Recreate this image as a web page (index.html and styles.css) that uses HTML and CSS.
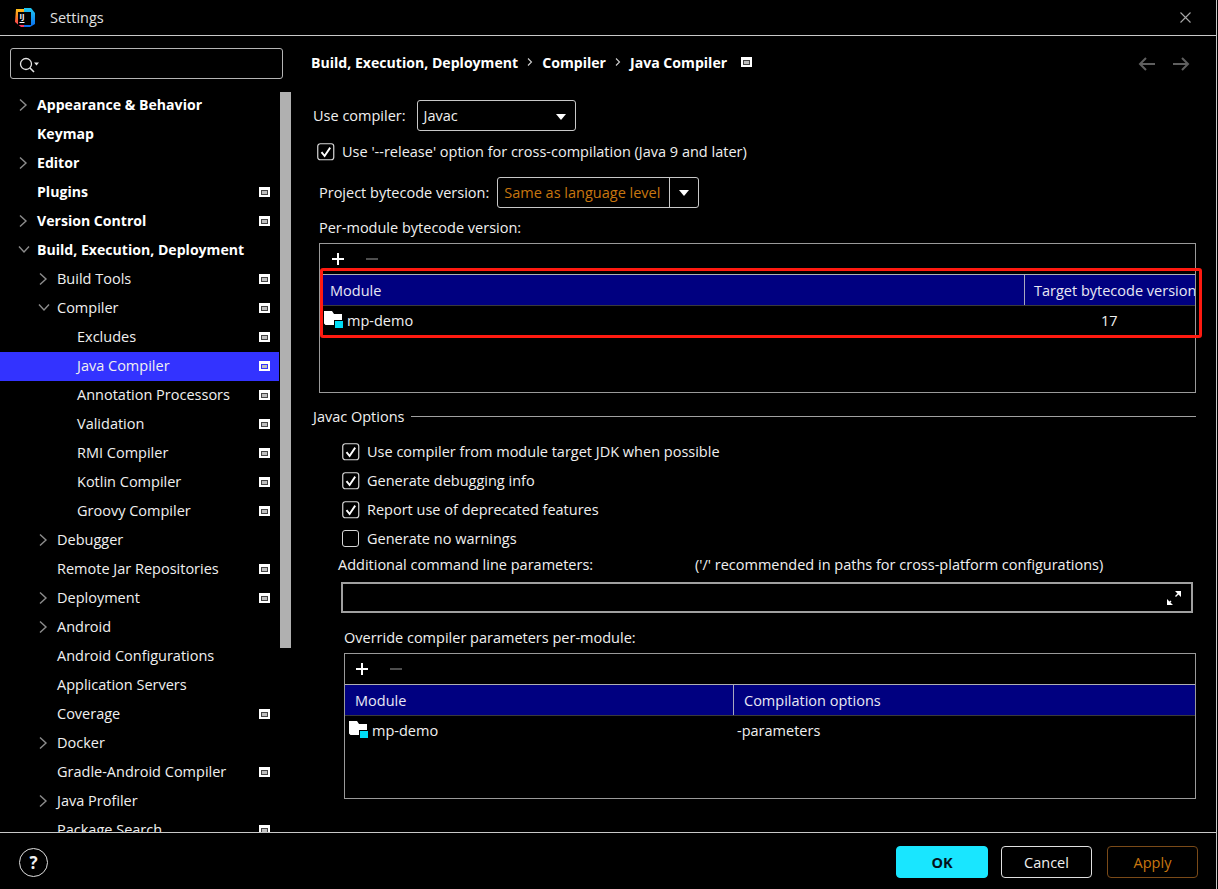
FILE: index.html
```html
<!DOCTYPE html>
<html lang="en">
<head>
    <meta charset="UTF-8">
    <meta name="viewport" content="width=device-width, initial-scale=1.0">
    <title>Settings</title>
    <link rel="stylesheet" href="styles.css">
</head>
<body>
    <svg class="defs" width="0" height="0">
        <symbol id="chev-right" viewBox="0 0 10 14"><path d="M2 1.5 8 7 2 12.5" fill="none" stroke="#8c8c8c" stroke-width="1.4"/></symbol>
        <symbol id="chev-down" viewBox="0 0 12 9"><path d="M1 1.500 6 7 11 1.500" fill="none" stroke="#8c8c8c" stroke-width="1.4"/></symbol>
        <symbol id="check" viewBox="0 0 18 18"><rect x=".75" y=".75" width="16" height="16" rx="2.5" fill="#000" stroke="#d8d8d8" stroke-width="1.2"/><path d="M4.5 9.2 7.6 13 13.2 4.6" fill="none" stroke="#fff" stroke-width="1.9"/></symbol>
        <symbol id="folder" viewBox="0 0 20 18"><path d="M0 0h8l2 3h8v11H1.500L0 12.500Z" fill="#fff"/><rect x="10" y="9" width="10" height="9" fill="#000"/><rect x="11" y="10" width="8" height="7" fill="#00dcf5"/></symbol>
        <linearGradient id="logo-warm" x1="0" y1="0" x2="0" y2="1"><stop offset="0" stop-color="#ffc21a"/><stop offset=".45" stop-color="#fb7a24"/><stop offset="1" stop-color="#fe2c6a"/></linearGradient>
        <linearGradient id="logo-cool" x1="0" y1="0" x2="0" y2="1"><stop offset="0" stop-color="#20c8f0"/><stop offset="1" stop-color="#0a6cf0"/></linearGradient>
    </svg>

    <div class="window">
        <header class="titlebar">
            <svg class="logo" width="20" height="20" viewBox="0 0 20 20">
                <path d="M1 1h9v18H6L0 14Z" fill="url(#logo-warm)"/>
                <path d="M9 0h7l4 5v11l-5 3H9Z" fill="url(#logo-cool)"/>
                <rect x="3" y="4" width="13" height="13" fill="#000"/>
                <text x="4.500" y="11" class="logo-text">IJ</text>
                <rect x="4.500" y="14" width="5" height="1" fill="#fff"/>
            </svg>
            <span class="title">Settings</span>
            <svg class="close" width="11" height="11" viewBox="0 0 11 11"><path d="M.5.5 10.500 10.500M10.500.5 .5 10.500" stroke="#a8a8a8" stroke-width="1.1"/></svg>
        </header>

        <div class="content">
            <aside class="sidebar">
                <div class="search">
                    <svg width="24" height="18" viewBox="0 0 24 18"><circle cx="8" cy="8" r="5.5" fill="none" stroke="#e4e4e4" stroke-width="1.3"/><path d="M12 12 16 16" stroke="#e4e4e4" stroke-width="1.6"/><path d="M16 6.5h5L18.500 9.500Z" fill="#e4e4e4"/></svg>
                </div>
                <div class="tree-wrap">
                    <nav class="tree">
                        <div class="row l0 strong"><svg class="chev"><use href="#chev-right"/></svg><span>Appearance &amp; Behavior</span></div>
                        <div class="row l0 strong"><span>Keymap</span></div>
                        <div class="row l0 strong"><svg class="chev"><use href="#chev-right"/></svg><span>Editor</span></div>
                        <div class="row l0 strong"><span>Plugins</span><i class="badge"></i></div>
                        <div class="row l0 strong"><svg class="chev"><use href="#chev-right"/></svg><span>Version Control</span><i class="badge"></i></div>
                        <div class="row l0 strong"><svg class="chev open"><use href="#chev-down"/></svg><span>Build, Execution, Deployment</span></div>
                        <div class="row l1"><svg class="chev"><use href="#chev-right"/></svg><span>Build Tools</span><i class="badge"></i></div>
                        <div class="row l1"><svg class="chev open"><use href="#chev-down"/></svg><span>Compiler</span><i class="badge"></i></div>
                        <div class="row l2"><span>Excludes</span><i class="badge"></i></div>
                        <div class="row l2 selected"><span>Java Compiler</span><i class="badge"></i></div>
                        <div class="row l2"><span>Annotation Processors</span><i class="badge"></i></div>
                        <div class="row l2"><span>Validation</span><i class="badge"></i></div>
                        <div class="row l2"><span>RMI Compiler</span><i class="badge"></i></div>
                        <div class="row l2"><span>Kotlin Compiler</span><i class="badge"></i></div>
                        <div class="row l2"><span>Groovy Compiler</span><i class="badge"></i></div>
                        <div class="row l1"><svg class="chev"><use href="#chev-right"/></svg><span>Debugger</span></div>
                        <div class="row l1"><span>Remote Jar Repositories</span><i class="badge"></i></div>
                        <div class="row l1"><svg class="chev"><use href="#chev-right"/></svg><span>Deployment</span><i class="badge"></i></div>
                        <div class="row l1"><svg class="chev"><use href="#chev-right"/></svg><span>Android</span></div>
                        <div class="row l1"><span>Android Configurations</span></div>
                        <div class="row l1"><span>Application Servers</span></div>
                        <div class="row l1"><span>Coverage</span><i class="badge"></i></div>
                        <div class="row l1"><svg class="chev"><use href="#chev-right"/></svg><span>Docker</span></div>
                        <div class="row l1"><span>Gradle-Android Compiler</span><i class="badge"></i></div>
                        <div class="row l1"><svg class="chev"><use href="#chev-right"/></svg><span>Java Profiler</span></div>
                        <div class="row l1"><span>Package Search</span><i class="badge"></i></div>
                    </nav>
                    <div class="scrollbar"></div>
                </div>
            </aside>

            <main class="panel">
                <div class="crumbs">
                    <span>Build, Execution, Deployment</span>
                    <svg class="sep" width="6" height="10" viewBox="0 0 6 10"><path d="M1 1.500 4.500 5 1 8.500" fill="none" stroke="#cfcfcf" stroke-width="1.100"/></svg>
                    <span>Compiler</span>
                    <svg class="sep" width="6" height="10" viewBox="0 0 6 10"><path d="M1 1.500 4.500 5 1 8.500" fill="none" stroke="#cfcfcf" stroke-width="1.100"/></svg>
                    <span>Java Compiler</span>
                    <i class="badge crumb-badge"></i>
                    <div class="nav-arrows">
                        <svg width="18" height="14" viewBox="0 0 18 14"><path d="M17 7H2M8 1 2 7l6 6" fill="none" stroke="#5f5f5f" stroke-width="2"/></svg>
                        <svg width="18" height="14" viewBox="0 0 18 14"><path d="M1 7h15M10 1l6 6-6 6" fill="none" stroke="#5f5f5f" stroke-width="2"/></svg>
                    </div>
                </div>

                <div class="compiler-row">
                    <label>Use compiler:</label>
                    <div class="combo compiler-combo"><span>Javac</span><b class="caret"></b></div>
                </div>

                <div class="check release"><svg class="box"><use href="#check"/></svg><span>Use '--release' option for cross-compilation (Java 9 and later)</span></div>

                <div class="bytecode-row">
                    <label>Project bytecode version:</label>
                    <div class="combo bytecode-combo"><span class="orange">Same as language level</span><div class="combo-btn"><b class="caret"></b></div></div>
                </div>

                <div class="per-module">
                    <div class="section-label">Per-module bytecode version:</div>
                    <div class="table table-top">
                        <div class="tools"><span class="plus"></span><span class="minus"></span></div>
                        <div class="thead">
                            <div class="th th-module">Module</div>
                            <div class="th th-target">Target bytecode version</div>
                        </div>
                        <div class="tr">
                            <svg class="folder"><use href="#folder"/></svg><span>mp-demo</span>
                            <span class="version">17</span>
                        </div>
                    </div>
                    <div class="annotation"></div>
                </div>

                <div class="group-title"><span>Javac Options</span><i></i></div>

                <div class="options">
                    <div class="check"><svg class="box"><use href="#check"/></svg><span>Use compiler from module target JDK when possible</span></div>
                    <div class="check"><svg class="box"><use href="#check"/></svg><span>Generate debugging info</span></div>
                    <div class="check"><svg class="box"><use href="#check"/></svg><span>Report use of deprecated features</span></div>
                    <div class="check"><span class="empty-box"></span><span>Generate no warnings</span></div>
                </div>

                <div class="params-label"><span class="params-name">Additional command line parameters:</span><span>('/' recommended in paths for cross-platform configurations)</span></div>
                <div class="params-input">
                    <svg width="16" height="16" viewBox="0 0 16 16"><path d="M9.500 6.500 14.500 1.500M5 11 1.500 14.500" stroke="#fff" stroke-width="1.400"/><path d="M9 1h6v6ZM1 9v6h6Z" fill="#fff"/></svg>
                </div>

                <div class="override">
                    <div class="section-label">Override compiler parameters per-module:</div>
                    <div class="table table-bottom">
                        <div class="tools"><span class="plus"></span><span class="minus"></span></div>
                        <div class="thead">
                            <div class="th th-module2">Module</div>
                            <div class="th th-options">Compilation options</div>
                        </div>
                        <div class="tr">
                            <svg class="folder"><use href="#folder"/></svg><span class="module-name">mp-demo</span>
                            <span>-parameters</span>
                        </div>
                    </div>
                </div>
            </main>
        </div>

        <footer class="footer">
            <div class="help">?</div>
            <div class="buttons">
                <button class="btn btn-ok">OK</button>
                <button class="btn btn-cancel">Cancel</button>
                <button class="btn btn-apply">Apply</button>
            </div>
        </footer>
    </div>
</body>
</html>
```

FILE: styles.css
```css
* {
    margin: 0;
    padding: 0;
    box-sizing: border-box;
}

body {
    width: 1218px;
    height: 889px;
    background: #000;
    color: #f0f0f0;
    font-family: "Open Sans", "Noto Sans", sans-serif;
    font-size: 14.5px;
    overflow: hidden;
}

.defs {
    position: absolute;
}

.window {
    width: 1217px;
    height: 889px;
    border-right: 1px solid #c8c8c8;
    display: flex;
    flex-direction: column;
}

/* title bar */
.titlebar {
    height: 36px;
    flex: none;
    border-bottom: 1px solid #c8c8c8;
    display: flex;
    align-items: center;
    padding: 0 25px 0 15px;
}

.logo-text {
    font-size: 7.500px;
    font-weight: 700;
    fill: #fff;
}

.title {
    margin-left: 15px;
    flex: 1;
    color: #e0e0e0;
}

/* main split */
.content {
    flex: 1;
    display: flex;
    min-height: 0;
}

.sidebar {
    width: 298px;
    flex: none;
    display: flex;
    flex-direction: column;
}

.search {
    margin: 12px 0 0 10px;
    width: 273px;
    height: 31px;
    flex: none;
    border: 1px solid #b4b4b4;
    border-radius: 3px;
    display: flex;
    align-items: center;
    padding: 2px 0 0 7px;
}

.tree-wrap {
    flex: 1;
    display: flex;
    min-height: 0;
    overflow: hidden;
    padding-top: 12px;
}

.tree {
    width: 280px;
    flex: none;
    height: 800px;
}

.scrollbar {
    width: 11px;
    height: 556px;
    margin-top: 1px;
    background: #b0b0b0;
}

.row {
    height: 29px;
    padding-bottom: 2px;
    display: flex;
    align-items: center;
    position: relative;
    color: #f0f0f0;
    white-space: nowrap;
}

.row.strong {
    font-weight: 700;
    font-size: 14.1px;
    color: #fff;
}

.l0 { padding-left: 37px; }
.l1 { padding-left: 57px; }
.l2 { padding-left: 77px; }

.chev {
    position: absolute;
    top: 7px;
    width: 10px;
    height: 14px;
}

.chev.open {
    top: 9px;
    width: 12px;
    height: 9px;
}

.l0 .chev { left: 18px; }
.l1 .chev { left: 38px; }

.selected {
    background: #3333ff;
    margin-right: 1px;
}

.badge {
    display: block;
    width: 11px;
    height: 10px;
    background: #bdbdbd;
    border: 2px solid #fff;
    border-top-width: 3px;
    box-shadow: inset 0 0 0 1px #444;
}

.row .badge {
    position: absolute;
    left: 259px;
    top: 9px;
}

.selected .badge {
    box-shadow: inset 0 0 0 1px #3333ff;
}

/* right panel */
.panel {
    flex: 1;
    padding-left: 15px;
    padding-right: 20px;
    position: relative;
    min-width: 0;
}

.crumbs {
    height: 20px;
    margin-top: 16px;
    display: flex;
    align-items: center;
    gap: 9px;
    font-weight: 700;
    font-size: 14.1px;
    color: #fff;
    margin-left: -2px;
}

.crumb-badge {
    margin-left: 5px;
}

.nav-arrows {
    margin-left: auto;
    display: flex;
    gap: 16px;
    margin-top: 3px;
    margin-right: 6px;
}

.compiler-row {
    margin-top: 28px;
    display: flex;
    align-items: center;
    gap: 11px;
}

.combo {
    border: 1px solid #c8c8c8;
    border-radius: 3px;
    height: 31px;
    display: flex;
    align-items: center;
    position: relative;
}

.compiler-combo {
    width: 159px;
    padding-left: 6px;
}

.caret {
    width: 0;
    height: 0;
    border-left: 5.500px solid transparent;
    border-right: 5.500px solid transparent;
    border-top: 6px solid #fff;
}

.compiler-combo .caret {
    position: absolute;
    right: 9px;
    top: 13px;
}

.check {
    display: flex;
    align-items: center;
    height: 29px;
    gap: 7px;
}

.box {
    width: 18px;
    height: 18px;
    flex: none;
}

.empty-box {
    width: 17px;
    height: 17px;
    flex: none;
    border: 1px solid #d8d8d8;
    border-radius: 3px;
    margin-right: 1px;
}

.release {
    margin: 6px 0 0 4px;
}

.bytecode-row {
    margin: 11px 0 0 6px;
    display: flex;
    align-items: center;
    gap: 8px;
}

.bytecode-combo {
    width: 202px;
    padding-left: 6px;
}

.orange {
    color: #c8760f;
}

.combo-btn {
    position: absolute;
    right: 0;
    top: 0;
    bottom: 0;
    width: 29px;
    border-left: 1px solid #c8c8c8;
    display: flex;
    align-items: center;
    justify-content: center;
}

.per-module {
    margin: 10px 0 0 6px;
    position: relative;
}

.section-label {
    height: 20px;
    line-height: 20px;
    white-space: nowrap;
}

.table {
    margin-top: 5px;
    border: 1px solid #9a9a9a;
}

.table-top {
    height: 150px;
    width: 877px;
}

.tools {
    height: 31px;
    display: flex;
    align-items: center;
    padding-left: 11px;
    gap: 20px;
    border-bottom: 1px solid #b0b0b0;
}

.plus,
.minus {
    width: 14px;
    height: 14px;
    display: block;
}

.plus {
    background:
        linear-gradient(#fff, #fff) center / 12px 2px no-repeat,
        linear-gradient(#fff, #fff) center / 2px 12px no-repeat;
}

.minus {
    background: linear-gradient(#4e4e4e, #4e4e4e) center / 12px 2px no-repeat;
}

.thead {
    height: 31px;
    display: flex;
    background: #000080;
    border-bottom: 1px solid #3a3a3a;
    color: #e8e8f4;
}

.th {
    display: flex;
    align-items: center;
    height: 30px;
    white-space: nowrap;
}

.th-module {
    width: 704px;
    padding-left: 10px;
}

.th-target {
    flex: 1;
    border-left: 1px solid #a8a8c0;
    padding-left: 9px;
    min-width: 0;
    overflow: hidden;
}

.tr {
    height: 30px;
    padding-bottom: 2px;
    display: flex;
    align-items: center;
    padding-left: 4px;
    position: relative;
}

.folder {
    width: 20px;
    height: 18px;
    margin-right: 3px;
    flex: none;
}

.version {
    position: absolute;
    left: 781px;
}

.annotation {
    position: absolute;
    left: 1px;
    top: 50px;
    width: 882px;
    height: 70px;
    border: 3px solid #ff1a10;
    border-radius: 3px;
    pointer-events: none;
}

.group-title {
    margin-top: 13px;
    height: 20px;
    display: flex;
    align-items: center;
    gap: 7px;
}

.group-title i {
    flex: 1;
    height: 1px;
    background: #a0a0a0;
}

.options {
    margin: 11px 0 0 29px;
}

.params-label {
    margin: 2px 0 0 25px;
    height: 20px;
    line-height: 20px;
    display: flex;
    white-space: nowrap;
}

.params-name {
    width: 357px;
}

.params-input {
    margin: 7px 3px 0 28px;
    height: 31px;
    border: 2px solid #a0a0a0;
    display: flex;
    align-items: center;
    justify-content: flex-end;
    padding-right: 9px;
}

.override {
    margin: 15px 0 0 31px;
}

.table-bottom {
    height: 146px;
}

.table-bottom .tools {
    padding-left: 10px;
}

.th-module2 {
    width: 388px;
    padding-left: 10px;
}

.th-options {
    flex: 1;
    border-left: 1px solid #a8a8c0;
    padding-left: 10px;
}

.module-name {
    width: 365px;
}

/* footer */
.footer {
    height: 57px;
    flex: none;
    border-top: 1px solid #c8c8c8;
    display: flex;
    align-items: center;
    justify-content: space-between;
    padding: 2px 18px 0 19px;
}

.help {
    width: 29px;
    height: 29px;
    border: 1px solid #e0e0e0;
    border-radius: 50%;
    display: flex;
    align-items: center;
    justify-content: center;
    font-weight: 700;
    font-size: 17px;
    color: #f0f0f0;
}

.buttons {
    display: flex;
    gap: 13px;
}

.btn {
    width: 91px;
    height: 32px;
    border-radius: 4px;
    font: inherit;
    background: #000;
    color: #f0f0f0;
    border: 1px solid #e0e0e0;
}

.btn-ok {
    width: 92px;
    background: #19e6ff;
    border-color: #19e6ff;
    color: #04121a;
    font-weight: 700;
}

.btn-apply {
    margin-left: 2px;
    border-color: #7a4a18;
    color: #c8760f;
}
```
